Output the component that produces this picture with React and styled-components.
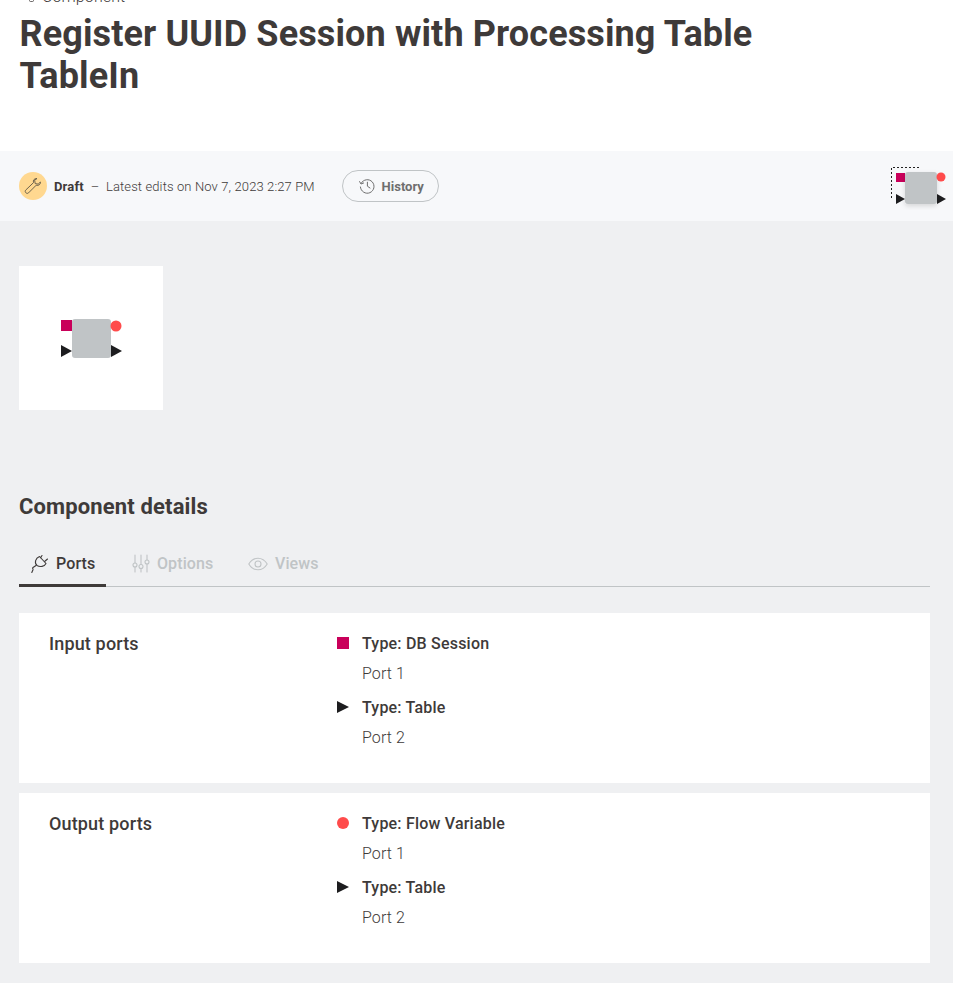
import React from "react";
import styled, { createGlobalStyle } from "styled-components";
import { Workflow } from "lucide-react";

const Global = createGlobalStyle`
  html, body { margin: 0; padding: 0; background: #fff; overflow: hidden; }
  body { font-family: Roboto, "Liberation Sans", sans-serif; color: #3e3a39; }
`;
const Page = styled.div`
  width: 953px;
  height: 983px;
  overflow: hidden;
  display: flex;
  flex-direction: column;
`;
const Header = styled.header`
  height: 151px;
  flex: none;
  box-sizing: border-box;
  padding: 0 20px;
  overflow: hidden;
`;
const Kicker = styled.div`
  display: flex;
  align-items: center;
  gap: 7px;
  height: 16px;
  margin: -11px 0 0 3px;
  font-size: 16px;
  font-weight: 300;
  line-height: 16px;
  letter-spacing: 0.1px;
`;
const Title = styled.h1`
  margin: 8px 0 0 -0.5px;
  width: 780px;
  font-size: 36px;
  font-weight: 700;
  line-height: 42px;
  letter-spacing: 0.12px;
`;
const StatusBar = styled.section`
  height: 70px;
  flex: none;
  background: #f7f8fa;
  display: flex;
  align-items: center;
  padding: 0 3px 0 19px;
`;
const Avatar = styled.span`
  width: 28px;
  height: 28px;
  border-radius: 50%;
  background: #ffd890;
  color: #5e5645;
  display: flex;
  align-items: center;
  justify-content: center;
  margin-right: 7px;
`;
const Draft = styled.strong`
  font-size: 13px;
  font-weight: 700;
  letter-spacing: 0.15px;
  margin-right: 7px;
`;
const Edits = styled.span`
  font-size: 13px;
  font-weight: 300;
  white-space: pre;
  letter-spacing: 0.12px;
`;
const HistoryButton = styled.button`
  margin-left: 27px;
  width: 97px;
  height: 32px;
  box-sizing: border-box;
  border: 1px solid #c0c4c6;
  border-radius: 16px;
  background: transparent;
  display: flex;
  align-items: center;
  justify-content: center;
  gap: 7px;
  padding: 0 0 0 2px;
  font: 700 13px Roboto, sans-serif;
  color: #6e6e6e;
`;
const MiniNode = styled.div`
  margin: 4px 0 0 auto;
  width: 60px;
  height: 44px;
  flex: none;
`;
const Main = styled.main`
  flex: 1;
  background: #eff0f2;
  padding: 45px 23px 0 19px;
`;
const Thumb = styled.div`
  width: 144px;
  height: 144px;
  background: #fff;
  display: flex;
  align-items: center;
  justify-content: center;
`;
const ThumbArt = styled.div`
  width: 62px;
  height: 40px;
  margin: 2px 0 0 2px;
`;
const Heading = styled.h2`
  margin: 83px 0 0;
  font-size: 22px;
  font-weight: 700;
  line-height: 28px;
  letter-spacing: 0.14px;
`;
const Tabs = styled.nav`
  display: flex;
  margin-top: 19px;
  height: 47px;
  box-sizing: border-box;
  border-bottom: 1px solid #c0c4c6;
`;
const Tab = styled.div`
  height: 47px;
  box-sizing: border-box;
  display: flex;
  align-items: center;
  gap: ${p => p.$gap}px;
  width: ${p => p.$w}px;
  padding-left: ${p => p.$pl}px;
  font-size: 16px;
  font-weight: 500;
  letter-spacing: 0.1px;
  color: ${p => (p.$active ? "#3e3a39" : "#c0c4c6")};
  border-bottom: ${p => (p.$active ? "3px solid #3e3a39" : "0")};
  padding-top: ${p => (p.$active ? "3px" : "0")};
`;
const Card = styled.section`
  margin-top: ${p => p.$mt}px;
  height: 170px;
  box-sizing: border-box;
  background: #fff;
  padding: 20px 30px;
  display: flex;
`;
const CardTitle = styled.h3`
  margin: 0;
  width: 288px;
  flex: none;
  font-size: 18px;
  font-weight: 500;
  line-height: 22px;
  letter-spacing: 0.15px;
`;
const PortList = styled.div`
  display: flex;
  flex-direction: column;
  margin-top: -1px;
`;
const Port = styled.div`
  display: grid;
  grid-template-columns: 25px auto;
  grid-auto-rows: 22px;
  row-gap: 8px;
  margin-bottom: 12px;
  align-items: center;
`;
const PortType = styled.strong`
  font-size: 16px;
  font-weight: 500;
  letter-spacing: 0.2px;
`;
const PortName = styled.span`
  grid-column: 2;
  font-size: 16px;
  font-weight: 300;
  letter-spacing: 0.1px;
`;

const PINK = "#c9005a";
const RED = "#ff4b4b";
const DARK = "#1d1d1f";

const Square = () => (
  <svg width="12" height="12" viewBox="0 0 12 12"><rect width="12" height="12" fill={PINK} /></svg>
);
const Dot = () => (
  <svg width="12" height="12" viewBox="0 0 12 12"><circle cx="6" cy="6" r="6" fill={RED} /></svg>
);
const Tri = () => (
  <svg width="12" height="12" viewBox="0 0 12 12"><path d="M0 0L12 6L0 12Z" fill={DARK} /></svg>
);

const NodeBig = () => (
  <svg width="62" height="40" viewBox="0 0 62 40">
    <rect x="0" y="1" width="11" height="11" fill={PINK} />
    <rect x="11" y="0" width="39" height="39" rx="3" fill="#c0c4c6" />
    <circle cx="55" cy="7" r="5.5" fill={RED} />
    <path d="M0 26L11 32L0 38Z" fill={DARK} />
    <path d="M50 26L61 32L50 38Z" fill={DARK} />
  </svg>
);
const NodeSmall = () => (
  <svg width="60" height="44" viewBox="0 0 60 44">
    <defs>
      <filter id="s" x="-30%" y="-30%" width="160%" height="160%">
        <feDropShadow dx="0" dy="2" stdDeviation="2.5" floodColor="#000" floodOpacity="0.14" />
      </filter>
    </defs>
    <path d="M1.5 32V1.5H31" fill="none" stroke="#222" strokeDasharray="2 2" />
    <rect x="6" y="7" width="9" height="9" fill={PINK} />
    <rect x="15" y="6" width="32" height="32" rx="3" fill="#c0c4c6" filter="url(#s)" />
    <circle cx="51" cy="11" r="4.5" fill={RED} />
    <path d="M6 28L15 33L6 38Z" fill={DARK} />
    <path d="M47 28L56 33L47 38Z" fill={DARK} />
  </svg>
);

const Line = styled.svg`
  flex: none;
  fill: none;
  stroke: currentColor;
  stroke-width: ${p => p.$sw || 1.1};
  stroke-linecap: round;
  stroke-linejoin: round;
`;
const PlugIcon = () => (
  <Line width="19" height="19" viewBox="0 0 19 19">
    <path d="M9.5 2.5L16 9.5C14.5 12.5 10 13.5 7 11.5C4 9 5.5 4 9.5 2.5Z" />
    <path d="M12 1.5L10.6 3.6M17.5 5L14.6 7.5" />
    <path d="M6 11.5L3 13.5C2 14.3 3.3 15 3 15.8L1.8 18.5" />
  </Line>
);
const SlidersIcon = () => (
  <Line width="18" height="19" viewBox="0 0 18 19">
    <path d="M3 1V9M3 13V18M9 1V10.5M9 14.5V18M15 1V6M15 10V18" />
    <circle cx="3" cy="11" r="2" />
    <circle cx="9" cy="12.5" r="2" />
    <circle cx="15" cy="8" r="2" />
  </Line>
);
const EyeIcon = () => (
  <Line width="20" height="14" viewBox="0 0 20 14">
    <path d="M0.8 7C3 3.3 6.3 1.2 10 1.2S17 3.3 19.2 7C17 10.7 13.7 12.8 10 12.8S3 10.7 0.8 7Z" />
    <circle cx="10" cy="7" r="3" />
  </Line>
);
const WrenchIcon = () => (
  <Line width="18" height="18" viewBox="0 0 18 18" $sw={0.9}>
    <path d="M12.6 1.5C10.4 1.2 8.7 3.3 9.5 5.6L1.6 13.2C0.9 14 1.2 15.1 1.9 15.8C2.6 16.5 3.7 16.6 4.5 15.9L12.2 8.2C14.6 9.1 16.8 7.2 16.4 5L14.2 7.1L11.2 6.6L10.7 3.6Z" />
  </Line>
);
const HistoryIcon = () => (
  <Line width="16" height="16" viewBox="0 0 16 16" $sw={1}>
    <path d="M2.2 5.2A6.8 6.8 0 1 1 1.4 9" />
    <path d="M0.6 3.6L2 6L4.6 5" />
    <path d="M8.4 4.2V8.2L11 10" />
  </Line>
);

export default function App() {
  return (
    <Page>
      <Global />
      <Header>
        <Kicker><Workflow size={12} strokeWidth={1.5} />Component</Kicker>
        <Title>Register UUID Session with Processing Table TableIn</Title>
      </Header>
      <StatusBar>
        <Avatar><WrenchIcon /></Avatar>
        <Draft>Draft</Draft>
        <Edits>–  Latest edits on Nov 7, 2023 2:27 PM</Edits>
        <HistoryButton><HistoryIcon />History</HistoryButton>
        <MiniNode><NodeSmall /></MiniNode>
      </StatusBar>
      <Main>
        <Thumb><ThumbArt><NodeBig /></ThumbArt></Thumb>
        <Heading>Component details</Heading>
        <Tabs>
          <Tab $active $w={87} $pl={11} $gap={7}><PlugIcon />Ports</Tab>
          <Tab $w={142} $pl={26} $gap={7}><SlidersIcon />Options</Tab>
          <Tab $w={90} $pl={0} $gap={7}><EyeIcon />Views</Tab>
        </Tabs>
        <Card $mt={26}>
          <CardTitle>Input ports</CardTitle>
          <PortList>
            <Port><Square /><PortType>Type: DB Session</PortType><PortName>Port 1</PortName></Port>
            <Port><Tri /><PortType>Type: Table</PortType><PortName>Port 2</PortName></Port>
          </PortList>
        </Card>
        <Card $mt={10}>
          <CardTitle>Output ports</CardTitle>
          <PortList>
            <Port><Dot /><PortType>Type: Flow Variable</PortType><PortName>Port 1</PortName></Port>
            <Port><Tri /><PortType>Type: Table</PortType><PortName>Port 2</PortName></Port>
          </PortList>
        </Card>
      </Main>
    </Page>
  );
}
